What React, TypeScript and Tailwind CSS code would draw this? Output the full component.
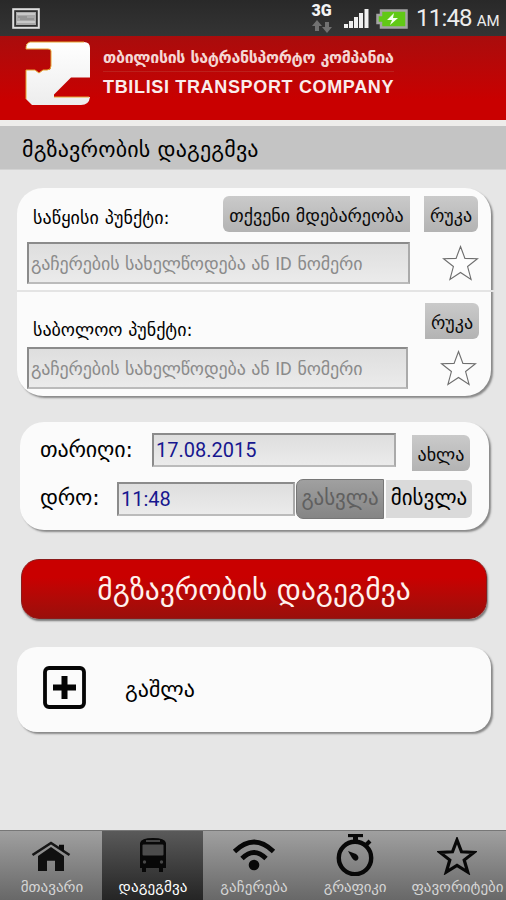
import React from 'react';

interface TabItem {
    label: string;
    icon: React.ReactNode;
    active?: boolean;
    textClass: string;
}

const STAR = 'M18 1.5 L22.3 13 L34.5 13.4 L24.9 21 L28.3 33.5 L18 26.8 L7.7 33.5 L11.1 21 L1.5 13.4 L13.7 13 Z';

const StarOutline = () => (
    <svg viewBox="0 0 36 36" className="h-[37px] w-[37px] shrink-0">
        <path d={STAR} fill="#fdfdfd" stroke="#6f6f6f" strokeWidth="1.1" />
    </svg>
);

const HomeIcon = () => (
    <svg viewBox="0 0 40 34" className="mt-[2px] h-[32px] w-[40px]" preserveAspectRatio="none">
        <path d="M1.5 15 L20 2 L38.5 15" fill="none" stroke="#161616" strokeWidth="2.6" />
        <path d="M28 4 H33 V12 L28 8 Z" fill="#0c0c0c" />
        <path d="M7 16 L20 6.5 L33 16 V32 H24 V21 H16 V32 H7 Z" fill="#101010" />
    </svg>
);

const BusIcon = () => (
    <svg viewBox="0 0 30 36" className="-mt-[3px] h-[36px] w-[30px]">
        <path d="M2 31 V6 Q3 1 15 1 Q27 1 28 6 V31 H25 V35 H21 V31 H8 V35 H4 V31 Z" fill="#080808" />
        <path d="M8 4 H22" stroke="#505050" strokeWidth="1.7" />
        <rect x="4.5" y="7.5" width="21" height="11" rx="1" fill="#4c4c4c" />
        <circle cx="6.5" cy="25" r="1.7" fill="#484848" />
        <circle cx="23.5" cy="25" r="1.7" fill="#484848" />
    </svg>
);

const SignalIcon = () => (
    <svg viewBox="0 0 44 34" className="-mt-[3px] h-[34px] w-[44px]" fill="none" stroke="#080808" strokeWidth="4.8">
        <path d="M2.5 13.5 Q22 -5.5 41.5 13.5" />
        <path d="M10 20.5 Q22 8.5 34 20.5" />
        <circle cx="22" cy="27" r="5.3" fill="#080808" stroke="none" />
    </svg>
);

const StopwatchIcon = () => (
    <svg viewBox="0 0 40 42" className="-mt-[3px] h-[42px] w-[40px]" fill="none" stroke="#080808">
        <circle cx="20" cy="24" r="16.2" strokeWidth="4.4" />
        <path d="M13 1.5 H28" strokeWidth="3.3" />
        <path d="M20.5 2 V8" strokeWidth="5" />
        <path d="M30 12 L35 7" strokeWidth="4" />
        <path d="M13 17 L21 20 Q25 23 22.5 26 Q19.5 28 17 24 Z" fill="#080808" stroke="none" />
    </svg>
);

const FavouriteIcon = () => (
    <svg viewBox="0 0 40 38" className="-mt-[1px] ml-[2px] h-[38px] w-[40px]">
        <path
            d="M20 3 L24.5 14.8 L37 15.4 L27.2 23 L30.7 35 L20 28.3 L9.3 35 L12.8 23 L3 15.4 L15.5 14.8 Z"
            fill="none"
            stroke="#080808"
            strokeWidth="3.2"
        />
    </svg>
);

const StatusBar = () => (
    <div className="flex h-9 items-center bg-gradient-to-b from-[#292929] to-[#343434] pl-3 font-['Roboto',sans-serif]">
        <svg viewBox="0 0 28 21" className="h-[21px] w-[28px]">
            <rect x="1.2" y="1.2" width="25.6" height="18.6" fill="#303030" stroke="#dedede" strokeWidth="2" />
            <rect x="4" y="4" width="20" height="13" fill="#a9a9a9" />
            <path d="M5 6 H23 M5 14 H23" stroke="#d2d2d2" strokeWidth="1.6" />
            <path d="M6 9 H15 M8 11 H22" stroke="#808080" />
        </svg>
        <div className="ml-auto flex h-full items-center">
            <div className="mr-[12px] flex w-[21px] flex-col items-center">
                <span className="text-[16px] leading-[14px] font-black text-[#f4f4f4]">3G</span>
                <svg viewBox="0 0 20 13" className="mt-[2px] h-[13px] w-[20px]" fill="#717171">
                    <path d="M5 0 L10 6 H7 V11 H3 V6 H0 Z M13 2 H17 V7 H20 L15 13 L10 7 H13 Z" />
                </svg>
            </div>
            <svg viewBox="0 0 25 20" className="mt-[2px] mr-[7px] h-5 w-[25px]" fill="#f0f0f0">
                <path d="M0 15 H4 V19 H0 Z M5 12 H9 V19 H5 Z M10 8 H14 V19 H10 Z M15 4 H19 V19 H15 Z M20.5 0 H24.5 V19 H20.5 Z" />
            </svg>
            <svg viewBox="0 0 32 20" className="mt-[2px] mr-2 h-5 w-[32px]">
                <path d="M5 1.5 H30.5 V18.5 H5 V14 H1.5 V6 H5 Z" fill="#61c916" stroke="#a4a4a4" strokeWidth="2.5" />
                <path d="M18 4 L11 11 H16 L14 16 L22 9 H17 Z" fill="#f5fff0" />
            </svg>
            <div className="flex w-[90px] items-baseline gap-[5px] whitespace-nowrap text-[#ededed]">
                <span className="text-[24px] leading-9 tracking-[-0.8px]">11:48</span>
                <span className="text-[15px]">AM</span>
            </div>
        </div>
    </div>
);

const Logo = () => (
    <svg viewBox="0 0 66 66" className="mt-[5px] h-[66px] w-[66px] shrink-0">
        <defs>
            <linearGradient id="logoFill" x1="0" y1="0" x2="0" y2="1">
                <stop offset="0" stopColor="#ffffff" />
                <stop offset="1" stopColor="#ededed" />
            </linearGradient>
        </defs>
        <path
            d="M5 1 H59 Q65 1 65 7 V36.5 H46 L29 53.5 V56 H65 Q64 64 56 64 H7 L1 58 V29 H10 L14 32 L18 29 H24 Q26 28 26 25 V10 Q26 8 23 8 H1 V4 Q2 2 5 1 Z"
            fill="url(#logoFill)"
        />
        <path
            d="M59 1 H5 Q1 2 1 8 H23 Q26 8 26 10 V25 Q26 29 22 29 H18 L14 32 L10 29 H1 V58 M29 56 H64"
            fill="none"
            stroke="#e5a532"
            strokeWidth="1"
        />
    </svg>
);

const tabs: TabItem[] = [
    { label: 'მთავარი', icon: <HomeIcon />, textClass: 'ml-[2px]' },
    { label: 'დაგეგმვა', icon: <BusIcon />, active: true, textClass: 'ml-[1px] tracking-[0.1px]' },
    { label: 'გაჩერება', icon: <SignalIcon />, textClass: 'ml-[1px] tracking-[0.1px]' },
    { label: 'გრაფიკი', icon: <StopwatchIcon />, textClass: 'ml-[1px] tracking-[-0.2px]' },
    { label: 'ფავორიტები', icon: <FavouriteIcon />, textClass: 'ml-[4px]' },
];

const fieldClass =
    'flex items-center border-2 border-t-[#8b8b8b] border-l-[#8b8b8b] border-r-[#aaa] border-b-[#bbb] bg-gradient-to-b from-[#dedede] to-[#ebebeb] whitespace-nowrap';
const buttonClass =
    'flex items-center justify-center bg-gradient-to-b from-[#cacaca] to-[#b3b3b3] pt-[2px] text-[18px] whitespace-nowrap text-[#090909]';

const StopField = ({ className }: { className: string }) => (
    <div className={`${fieldClass} ${className} h-[42px] pl-[2px] text-[18px] tracking-[-0.13px] text-[#8b8b8b]`}>
        <span>
            გაჩერების სახელწოდება ან <span className="font-['Roboto',sans-serif] text-[18px] tracking-normal">ID</span> ნომერი
        </span>
    </div>
);

export default function App() {
    return (
        <div className="flex h-[900px] w-[506px] flex-col overflow-hidden bg-[#e6e6e6] font-['DejaVu_Sans',sans-serif] text-black">
            <StatusBar />

            <header className="flex h-[84px] bg-gradient-to-b from-[#a90c0c] to-[#c90000] to-75% pl-[25px]">
                <Logo />
                <div className="ml-3 whitespace-nowrap">
                    <p className="mt-[10px] h-[25px] text-[16px] leading-[24px] font-bold tracking-[-0.32px] text-[#f4d7d4]">
                        თბილისის სატრანსპორტო კომპანია
                    </p>
                    <div className="h-px w-[291px] bg-[#bc201c]" />
                    <p className="mt-1 font-['Liberation_Sans',sans-serif] text-[18px] leading-[22px] font-bold tracking-[0.66px] text-[#faecec]">
                        TBILISI TRANSPORT COMPANY
                    </p>
                </div>
            </header>
            <div className="h-[6px] bg-[#eeedeb]" />
            <div className="flex h-11 items-center border-b border-[#d3d3d3] bg-[#c4c4c4] pt-1 pl-[22px]">
                <h1 className="text-[22px] leading-[24px] tracking-[0.16px] whitespace-nowrap">მგზავრობის დაგეგმვა</h1>
            </div>

            <main className="flex flex-col">
                <section className="mt-[18px] ml-[17px] flex h-[208px] w-[474px] flex-col rounded-[26px] bg-[#fbfbfb] shadow-[2px_2px_2px_#888]">
                    <div className="h-[102px] pt-2 pl-[10px]">
                        <div className="flex h-9">
                            <span className="mt-[9px] ml-[6px] w-[190px] text-[18px] leading-[26px] tracking-[0.1px] whitespace-nowrap">საწყისი პუნქტი:</span>
                            <button className={`${buttonClass} h-9 w-[187px] rounded-l-[6px]`}>თქვენი მდებარეობა</button>
                            <button className={`${buttonClass} ml-[14px] h-9 w-[54px] rounded-r-[6px]`}>რუკა</button>
                        </div>
                        <div className="mt-[10px] flex items-center">
                            <StopField className="w-[383px]" />
                            <div className="ml-8"><StarOutline /></div>
                        </div>
                    </div>
                    <div className="h-[2px] w-[477px] bg-[#e4e4e4]" />
                    <div className="h-[104px] pt-[11px] pl-[10px]">
                        <div className="flex h-9">
                            <span className="mt-[14px] ml-[6px] w-[392px] text-[18px] leading-[26px] whitespace-nowrap">საბოლოო პუნქტი:</span>
                            <button className={`${buttonClass} h-9 w-[54px] rounded-r-[6px]`}>რუკა</button>
                        </div>
                        <div className="mt-[8px] flex items-center">
                            <StopField className="w-[381px]" />
                            <div className="ml-8"><StarOutline /></div>
                        </div>
                    </div>
                </section>

                <section className="mt-[26px] ml-5 h-[108px] w-[469px] rounded-[24px] bg-[#fbfbfb] pt-[11px] pl-5 shadow-[2px_2px_2px_#888]">
                    <div className="flex h-[48px]">
                        <span className="w-[112px] text-[22px] leading-[34px] tracking-[-0.15px] whitespace-nowrap">თარიღი:</span>
                        <div className={`${fieldClass} h-[34px] w-[244px] pl-[2px] font-['Roboto',sans-serif] text-[20px] text-[#17178f]`}>17.08.2015</div>
                        <button className={`${buttonClass} mt-[2px] ml-4 h-9 w-[58px] rounded-r-[6px]`}>ახლა</button>
                    </div>
                    <div className="flex">
                        <span className="w-[77px] text-[22px] leading-[34px] tracking-[-0.2px] whitespace-nowrap">დრო:</span>
                        <div className={`${fieldClass} mt-[1px] h-[34px] w-[178px] pl-[2px] font-['Roboto',sans-serif] text-[20px] text-[#17178f]`}>11:48</div>
                        <button className="ml-[1px] -mt-[2px] h-[40px] w-[88px] rounded-l-[7px] border border-[#777] bg-gradient-to-b from-[#a0a0a0] to-[#858585] text-[21px] tracking-[-0.1px] whitespace-nowrap text-[#606060]">გასვლა</button>
                        <button className="-mt-[1px] ml-[2px] h-[38px] w-[86px] rounded-r-[6px] bg-[#dadada] text-[21px] whitespace-nowrap">მისვლა</button>
                    </div>
                </section>

                <button className="mt-[29px] ml-[21px] h-[60px] w-[466px] rounded-[18px] border border-[#8b1b1b] bg-gradient-to-b from-[#c90000] from-30% to-[#9a0e0b] pt-[2px] text-[29.5px] whitespace-nowrap text-[#fff1ed] shadow-[1px_2px_2px_#777]">
                    მგზავრობის დაგეგმვა
                </button>

                <section className="mt-7 ml-[17px] flex h-[85px] w-[474px] items-center rounded-[20px] bg-[#fbfbfb] pl-[26px] shadow-[2px_2px_2px_#888]">
                    <svg viewBox="0 0 43 43" className="-mt-[5px] h-[43px] w-[43px]" fill="none" stroke="#050505">
                        <rect x="2" y="2" width="39" height="39" rx="4" strokeWidth="3.8" />
                        <path d="M21.5 10 V33 M10 21.5 H33" strokeWidth="6" />
                    </svg>
                    <span className="ml-[39px] text-[22px] whitespace-nowrap">გაშლა</span>
                </section>
            </main>

            <nav className="mt-auto grid h-[70px] grid-cols-[102px_101px_101px_101px_101px] border-t border-[#777]">
                {tabs.map((tab) => (
                    <div
                        key={tab.label}
                        className={`flex flex-col items-center ${tab.active ? 'bg-gradient-to-b from-[#5a5a5a] to-[#252525] text-white' : 'bg-gradient-to-b from-[#a0a0a0] to-[#686868] text-[#d5d5d5]'}`}
                    >
                        <div className="flex h-[47px] items-center pt-[3px]">{tab.icon}</div>
                        <span className={`${tab.textClass} text-[15px] leading-[18px] whitespace-nowrap`}>{tab.label}</span>
                    </div>
                ))}
            </nav>
        </div>
    );
}
